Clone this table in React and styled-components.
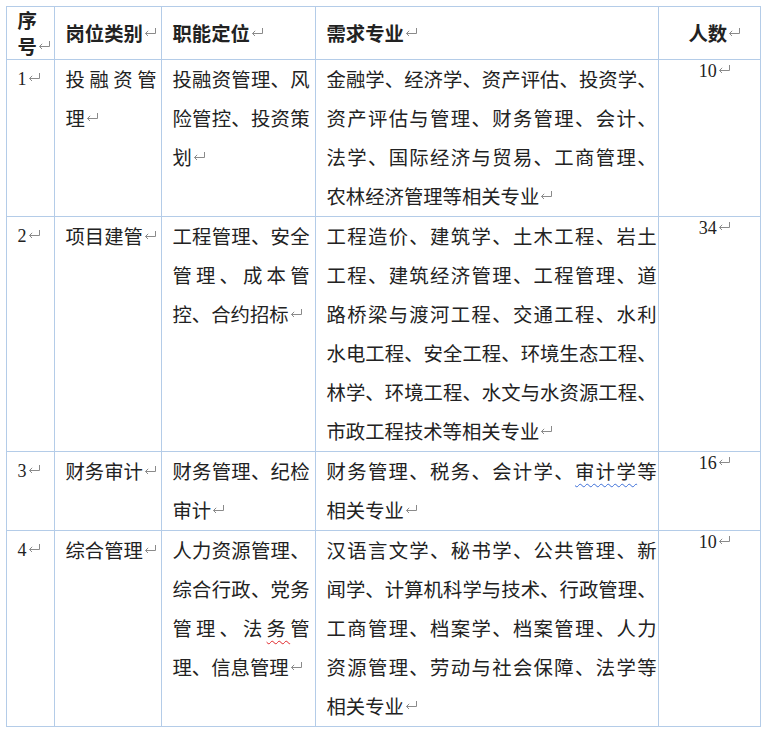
import React from "react";
import styled, { createGlobalStyle } from "styled-components";

const GlobalStyle = createGlobalStyle`
  body {
    margin: 0;
    background: #ffffff;
  }
`;

const BORDER = "#b4cce8";
const CJK = `"Noto Sans CJK SC", "Noto Sans", sans-serif`;

// column widths measured border to border, with right padding per column
const columns = [
  { width: 48, pr: 4 },
  { width: 107, pr: 4.5 },
  { width: 154, pr: 5.5 },
  { width: 343, pr: 1.5 },
  { width: 102, pr: 0, center: true },
];

const rows = [
  {
    no: "1",
    type: ["投融资管", "理"],
    role: ["投融资管理、风", "险管控、投资策", "划"],
    majors: [
      "金融学、经济学、资产评估、投资学、",
      "资产评估与管理、财务管理、会计、",
      "法学、国际经济与贸易、工商管理、",
      "农林经济管理等相关专业",
    ],
    count: "10",
  },
  {
    no: "2",
    type: ["项目建管"],
    role: ["工程管理、安全", "管理、成本管", "控、合约招标"],
    majors: [
      "工程造价、建筑学、土木工程、岩土",
      "工程、建筑经济管理、工程管理、道",
      "路桥梁与渡河工程、交通工程、水利",
      "水电工程、安全工程、环境生态工程、",
      "林学、环境工程、水文与水资源工程、",
      "市政工程技术等相关专业",
    ],
    count: "34",
  },
  {
    no: "3",
    type: ["财务审计"],
    role: ["财务管理、纪检", "审计"],
    majors: [
      ["财务管理、税务、会计学、", { text: "审计学", tone: "#3d6fd8" }, "等"],
      "相关专业",
    ],
    count: "16",
  },
  {
    no: "4",
    type: ["综合管理"],
    role: [
      "人力资源管理、",
      "综合行政、党务",
      ["管理、法", { text: "务", tone: "#e0262a" }, "管"],
      "理、信息管理",
    ],
    majors: [
      "汉语言文学、秘书学、公共管理、新",
      "闻学、计算机科学与技术、行政管理、",
      "工商管理、档案学、档案管理、人力",
      "资源管理、劳动与社会保障、法学等",
      "相关专业",
    ],
    count: "10",
  },
];

const Page = styled.div`
  padding: 6px 0 0 6px;
`;

const Sheet = styled.table`
  border-collapse: collapse;
  table-layout: fixed;
  width: 755px;
  font-family: ${CJK};
  color: #222222;
`;

const HeadCell = styled.th`
  border: 1px solid ${BORDER};
  height: 52px;
  padding: 0 ${(p) => p.$pr}px 0 10.5px;
  font-size: 19.35px;
  line-height: 26px;
  font-weight: 700;
  text-align: ${(p) => (p.$center ? "center" : "left")};
  vertical-align: middle;
  white-space: nowrap;
`;

const Cell = styled.td`
  border: 1px solid ${BORDER};
  padding: 0 ${(p) => p.$pr}px 0 10.5px;
  font-size: 19.35px;
  line-height: 39px;
  text-align: ${(p) => (p.$center ? "center" : "left")};
  vertical-align: top;
  white-space: nowrap;
`;

const Line = styled.span`
  display: block;
  text-align: ${(p) => (p.$justify ? "justify" : "inherit")};
  text-align-last: ${(p) => (p.$justify ? "justify" : "auto")};
`;

const Digits = styled.span`
  display: block;
  font-family: "Liberation Serif", serif;
  font-size: 18px;
  line-height: ${(p) => (p.$tall ? 39 : 23)}px;
`;

const Squiggle = styled.span`
  text-decoration: underline wavy ${(p) => p.$tone};
  text-decoration-thickness: 1px;
  text-underline-offset: 4px;
  text-decoration-skip-ink: none;
`;

const MarkSvg = styled.svg`
  display: inline-block;
  width: 13px;
  height: 8px;
  margin-left: 1px;
  vertical-align: ${(p) => p.$lift}px;
`;

const Mark = ({ lift = 5 }) => (
  <MarkSvg viewBox="0 0 13 8" $lift={lift}>
    <path d="M11.5 0 V5.5 H1.5" fill="none" stroke="#8a8a8a" strokeWidth="1" />
    <path d="M4.2 2.8 L1.5 5.5 L4.2 8.2" fill="none" stroke="#8a8a8a" strokeWidth="1" />
  </MarkSvg>
);

const renderParts = (line) => {
  const parts = Array.isArray(line) ? line : [line];
  return parts.map((part, i) =>
    typeof part === "string" ? (
      <React.Fragment key={i}>{part}</React.Fragment>
    ) : (
      <Squiggle key={i} $tone={part.tone}>
        {part.text}
      </Squiggle>
    )
  );
};

const Paragraph = ({ lines }) =>
  lines.map((line, i) => {
    const last = i === lines.length - 1;
    return (
      <Line key={i} $justify={!last}>
        {renderParts(line)}
        {last && <Mark />}
      </Line>
    );
  });

export default function App() {
  return (
    <>
      <GlobalStyle />
      <Page>
        <Sheet>
          <colgroup>
            {columns.map((c, i) => (
              <col key={i} style={{ width: c.width }} />
            ))}
          </colgroup>
          <thead>
            <tr>
              <HeadCell $pr={columns[0].pr}>
                <Paragraph lines={["序", "号"]} />
              </HeadCell>
              <HeadCell $pr={columns[1].pr}>
                岗位类别
                <Mark />
              </HeadCell>
              <HeadCell $pr={columns[2].pr}>
                职能定位
                <Mark />
              </HeadCell>
              <HeadCell $pr={columns[3].pr}>
                需求专业
                <Mark />
              </HeadCell>
              <HeadCell $pr={columns[4].pr} $center>
                人数
                <Mark />
              </HeadCell>
            </tr>
          </thead>
          <tbody>
            {rows.map((row) => (
              <tr key={row.no}>
                <Cell $pr={columns[0].pr}>
                  <Digits $tall>
                    {row.no}
                    <Mark lift={4} />
                  </Digits>
                </Cell>
                <Cell $pr={columns[1].pr}>
                  <Paragraph lines={row.type} />
                </Cell>
                <Cell $pr={columns[2].pr}>
                  <Paragraph lines={row.role} />
                </Cell>
                <Cell $pr={columns[3].pr}>
                  <Paragraph lines={row.majors} />
                </Cell>
                <Cell $pr={columns[4].pr} $center>
                  <Digits>
                    {row.count}
                    <Mark lift={4} />
                  </Digits>
                </Cell>
              </tr>
            ))}
          </tbody>
        </Sheet>
      </Page>
    </>
  );
}
